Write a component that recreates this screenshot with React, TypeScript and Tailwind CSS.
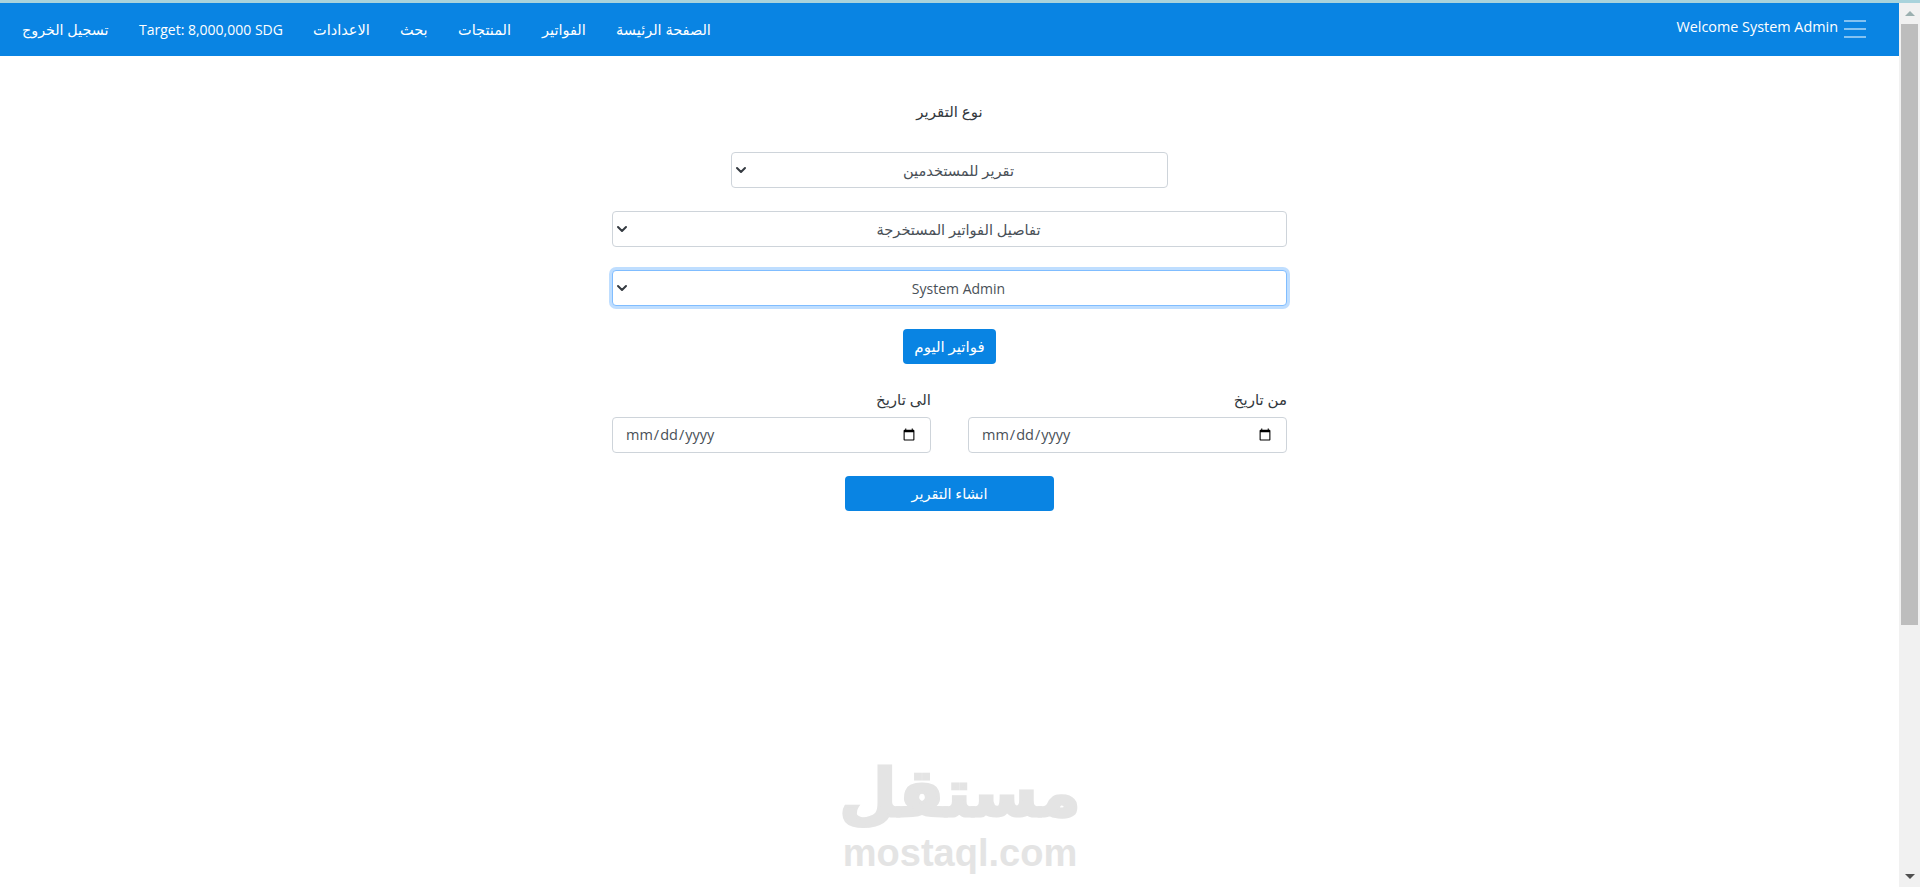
import { ChevronDown } from "lucide-react";

const navItems = [
  { label: "تسجيل الخروج", width: "w-[86px]", size: "text-[14.3px]" },
  { label: "Target: 8,000,000 SDG", width: "w-[143px]", size: "text-[14px]" },
  { label: "الاعدادات", width: "w-[56px]", size: "text-[14.5px]" },
  { label: "بحث", width: "w-[27px]", size: "text-[14.5px]" },
  { label: "المنتجات", width: "w-[53px]", size: "text-[14.5px]" },
  { label: "الفواتير", width: "w-[43px]", size: "text-[14.5px]" },
  { label: "الصفحة الرئيسة", width: "w-[95px]", size: "text-[14.5px]" },
];

function SelectBox({ value, className, textSize, focused }: { value: string; className: string; textSize: string; focused?: boolean }) {
  const border = focused
    ? "border-[#80bdff] shadow-[0_0_0_3px_rgba(0,123,255,0.25)]"
    : "border-[#ced4da]";
  return (
    <div className={`relative h-9 shrink-0 ${className}`}>
      <select
        dir="rtl"
        defaultValue={value}
        className={`h-full w-full appearance-none rounded border bg-white pl-[18px] text-center text-[#495057] outline-none ${textSize} ${border}`}
      >
        <option>{value}</option>
      </select>
      <ChevronDown
        size={16}
        strokeWidth={3}
        className="pointer-events-none absolute left-[2px] top-[10px] text-[#343a40]"
      />
    </div>
  );
}

function DateField({ label }: { label: string }) {
  return (
    <div className="flex flex-col gap-[6px]">
      <label className="h-6 text-right text-[15px] leading-6 text-[#33383d]">{label}</label>
      <input
        dir="ltr"
        type="date"
        className="h-9 w-full rounded border border-[#ced4da] bg-white px-3 text-[14.5px] text-[#495057] outline-none"
      />
    </div>
  );
}

function Scrollbar() {
  return (
    <aside className="flex h-full w-[21px] shrink-0 flex-col items-center bg-[#f1f1f1]">
      <div className="flex h-[21px] w-full items-center justify-center">
        <div className="h-0 w-0 border-x-[5px] border-b-[5px] border-x-transparent border-b-[#9bb0b0]" />
      </div>
      <div className="h-[601px] w-[17px] bg-[#bdbdbd]" />
      <div className="flex-1" />
      <div className="flex h-[21px] w-full items-center justify-center">
        <div className="h-0 w-0 border-x-[5px] border-t-[5px] border-x-transparent border-t-[#505050]" />
      </div>
    </aside>
  );
}

export default function App() {
  return (
    <div className="relative flex h-[887px] flex-col overflow-hidden bg-white font-['Open_Sans','DejaVu_Sans',sans-serif]">
      <div className="h-[3px] shrink-0 bg-[#a9d3dc]" />
      <div className="flex min-h-0 flex-1">
        <main className="min-w-0 flex-1">
          {/* Navbar */}
          <nav className="flex h-[53px] items-center justify-between bg-[#0984e3] pl-[22px] pr-[33px] text-white">
            <ul className="flex items-center gap-[31px]">
              {navItems.map((item) => (
                <li key={item.label} className={`${item.width} ${item.size} whitespace-nowrap text-center`}>
                  {item.label}
                </li>
              ))}
            </ul>
            <div className="flex items-center gap-[6px]">
              <span className="mb-[6px] text-[14.4px]">Welcome System Admin</span>
              <svg width="22" height="18" viewBox="0 0 22 18" fill="none" stroke="rgba(255,255,255,0.5)" strokeWidth="2">
                <path d="M0 1h22M0 9h22M0 17h22" />
              </svg>
            </div>
          </nav>

          {/* Report form */}
          <form dir="rtl" className="mx-auto flex w-[675px] flex-col items-center pt-[44px]">
            <p className="h-6 text-[15px] leading-[22px] text-[#33383d]">نوع التقرير</p>
            <SelectBox value="تقرير للمستخدمين" textSize="pt-[2px] text-[14.6px]" className="mt-[28px] w-[437px]" />
            <SelectBox value="تفاصيل الفواتير المستخرجة" textSize="pt-[2px] text-[14.6px]" className="mt-[23px] w-full" />
            <SelectBox value="System Admin" textSize="text-[14px]" className="mt-[23px] w-full" focused />
            <button type="button" className="mt-[23px] h-[35px] w-[93px] rounded bg-[#0984e3] text-[15px] text-white">
              فواتير اليوم
            </button>
            <div className="mt-[23px] grid w-full grid-cols-2 gap-[37px]">
              <DateField label="من تاريخ" />
              <DateField label="الى تاريخ" />
            </div>
            <button type="button" className="mt-[23px] h-[35px] w-[209px] rounded bg-[#0984e3] text-[14.5px] text-white">
              انشاء التقرير
            </button>
          </form>
        </main>
        <Scrollbar />
      </div>

      {/* Watermark */}
      <div className="pointer-events-none absolute bottom-[18px] left-[845px] flex w-[230px] flex-col items-center text-[#e4e4e4]">
        <span className="mb-[8px] text-[66px] font-bold leading-[70px] [-webkit-text-stroke:3px_#e4e4e4] font-['DejaVu_Sans',sans-serif]">مستقل</span>
        <span className="text-[38px] font-bold leading-[32px] font-['Liberation_Sans',sans-serif]">mostaql.com</span>
      </div>
    </div>
  );
}
